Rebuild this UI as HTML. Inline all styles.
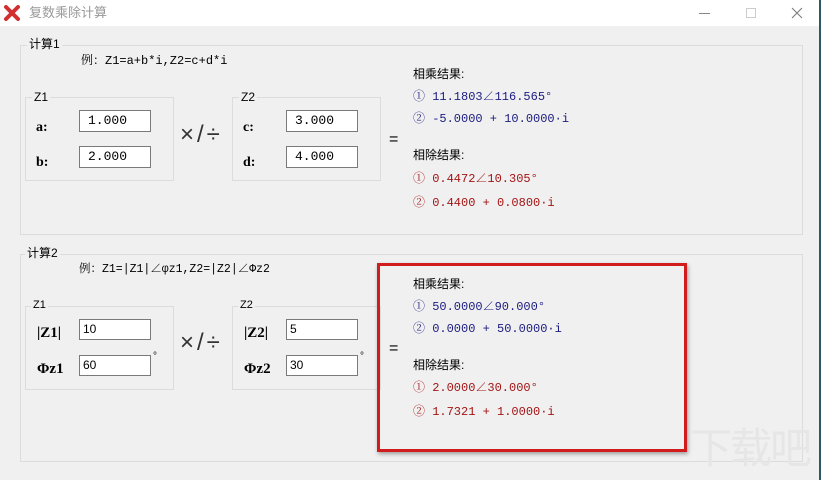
<!DOCTYPE html>
<html><head><meta charset="utf-8"><style>
*{margin:0;padding:0;box-sizing:border-box}
body{width:821px;height:480px;background:#f0f0f0;position:relative;overflow:hidden;font-family:"Liberation Sans","Noto Sans CJK SC",sans-serif;font-size:12px;color:#000}
.a{position:absolute;white-space:nowrap;line-height:1}
.title{position:absolute;left:0;top:0;width:821px;height:26px;background:#fff}
.grp{position:absolute;border:1px solid #dcdcdc}
.lbl{position:absolute;background:#f0f0f0;padding:0 2px;line-height:1;font-size:12px}
.inp{position:absolute;width:72px;height:22px;background:#fff;border:1px solid #7a7a7a;font-family:"Liberation Mono","Noto Serif CJK SC",monospace;font-size:13px;padding:3px 0 0 8px;line-height:1}
.inp2{font-family:"Liberation Sans",sans-serif;font-size:12px;padding:3px 0 0 3px}
.m{font-family:"Liberation Mono","Noto Serif CJK SC",monospace;font-size:12px}
.bl{color:#1c1c80}.rd{color:#a31515}
.b{font-family:"Liberation Serif","Noto Serif CJK SC",serif;font-weight:bold;font-size:14px}
.op{font-size:24px;color:#333;letter-spacing:3px}
</style></head><body>
<div class="title"></div>
<div style="position:absolute;right:0;top:0;width:2px;height:480px;background:#2c5a64"></div>
<svg class="a" style="left:4px;top:5px" width="16" height="16" viewBox="0 0 16 16"><path d="M2 2 L14 14 M14 2 L2 14" stroke="#d23030" stroke-width="4" stroke-linecap="round"/></svg>
<div class="a" style="left:29px;top:6px;color:#999;font-size:13px">复数乘除计算</div>
<div class="a" style="left:699px;top:13px;width:11px;height:1px;background:#888"></div>
<div class="a" style="left:746px;top:8px;width:10px;height:10px;border:1px solid #ccc"></div>
<svg class="a" style="left:791px;top:7px" width="12" height="12" viewBox="0 0 12 12"><path d="M1 1L11 11M11 1L1 11" stroke="#777" stroke-width="1"/></svg>

<div class="grp" style="left:20px;top:45px;width:783px;height:190px"></div>
<div class="lbl" style="left:27px;top:38px">计算1</div>
<div class="a m" style="left:81px;top:55px">例：Z1=a+b*i,Z2=c+d*i</div>
<div class="grp" style="left:25px;top:97px;width:149px;height:84px"></div>
<div class="lbl" style="left:32px;top:91px">Z1</div>
<div class="a b" style="left:36px;top:121px">a:</div>
<div class="a b" style="left:36px;top:156px">b:</div>
<div class="inp" style="left:79px;top:110px">1.000</div>
<div class="inp" style="left:79px;top:146px">2.000</div>
<div class="a op" style="left:180px;top:123px">×/÷</div>
<div class="grp" style="left:232px;top:97px;width:149px;height:84px"></div>
<div class="lbl" style="left:239px;top:91px">Z2</div>
<div class="a b" style="left:243px;top:121px">c:</div>
<div class="a b" style="left:243px;top:156px">d:</div>
<div class="inp" style="left:286px;top:110px">3.000</div>
<div class="inp" style="left:286px;top:146px">4.000</div>
<div class="a" style="left:389px;top:132px;font-size:16px">=</div>
<div class="a" style="left:413px;top:68px">相乘结果:</div>
<div class="a m bl" style="left:413px;top:91px">① 11.1803∠116.565°</div>
<div class="a m bl" style="left:413px;top:113px">② -5.0000 + 10.0000·i</div>
<div class="a" style="left:413px;top:149px">相除结果:</div>
<div class="a m rd" style="left:413px;top:173px">① 0.4472∠10.305°</div>
<div class="a m rd" style="left:413px;top:197px">② 0.4400 + 0.0800·i</div>

<div class="grp" style="left:20px;top:254px;width:783px;height:208px"></div>
<div class="lbl" style="left:25px;top:247px">计算2</div>
<div class="a m" style="left:79px;top:264px;font-size:11.5px">例：Z1=|Z1|∠φz1,Z2=|Z2|∠Φz2</div>
<div class="grp" style="left:25px;top:306px;width:149px;height:84px"></div>
<div class="lbl" style="left:31px;top:300px;font-size:11px">Z1</div>
<div class="a b" style="left:37px;top:326px;font-size:15px">|Z1|</div>
<div class="a b" style="left:37px;top:362px;font-size:15px">Φz1</div>
<div class="inp inp2" style="left:79px;top:319px;height:21px">10</div>
<div class="inp inp2" style="left:79px;top:355px;height:21px">60</div>
<div class="a" style="left:153px;top:352px;font-size:10px">°</div>
<div class="a op" style="left:180px;top:331px">×/÷</div>
<div class="grp" style="left:232px;top:306px;width:149px;height:84px"></div>
<div class="lbl" style="left:238px;top:300px;font-size:11px">Z2</div>
<div class="a b" style="left:244px;top:326px;font-size:15px">|Z2|</div>
<div class="a b" style="left:244px;top:362px;font-size:15px">Φz2</div>
<div class="inp inp2" style="left:286px;top:319px;height:21px">5</div>
<div class="inp inp2" style="left:286px;top:355px;height:21px">30</div>
<div class="a" style="left:360px;top:352px;font-size:10px">°</div>
<div class="a" style="left:389px;top:341px;font-size:16px">=</div>
<div class="a" style="left:413px;top:278px">相乘结果:</div>
<div class="a m bl" style="left:413px;top:301px">① 50.0000∠90.000°</div>
<div class="a m bl" style="left:413px;top:323px">② 0.0000 + 50.0000·i</div>
<div class="a" style="left:413px;top:359px">相除结果:</div>
<div class="a m rd" style="left:413px;top:382px">① 2.0000∠30.000°</div>
<div class="a m rd" style="left:413px;top:406px">② 1.7321 + 1.0000·i</div>
<div class="a" style="left:377px;top:263px;width:310px;height:189px;border:3px solid #d01c1c;box-shadow:1px 2px 4px rgba(0,0,0,.35)"></div>
<div class="a" style="left:690px;top:425px;font-size:42px;color:#e6e6e6;font-family:'Noto Sans CJK SC',sans-serif;letter-spacing:-2px">下载吧</div>
</body></html>
